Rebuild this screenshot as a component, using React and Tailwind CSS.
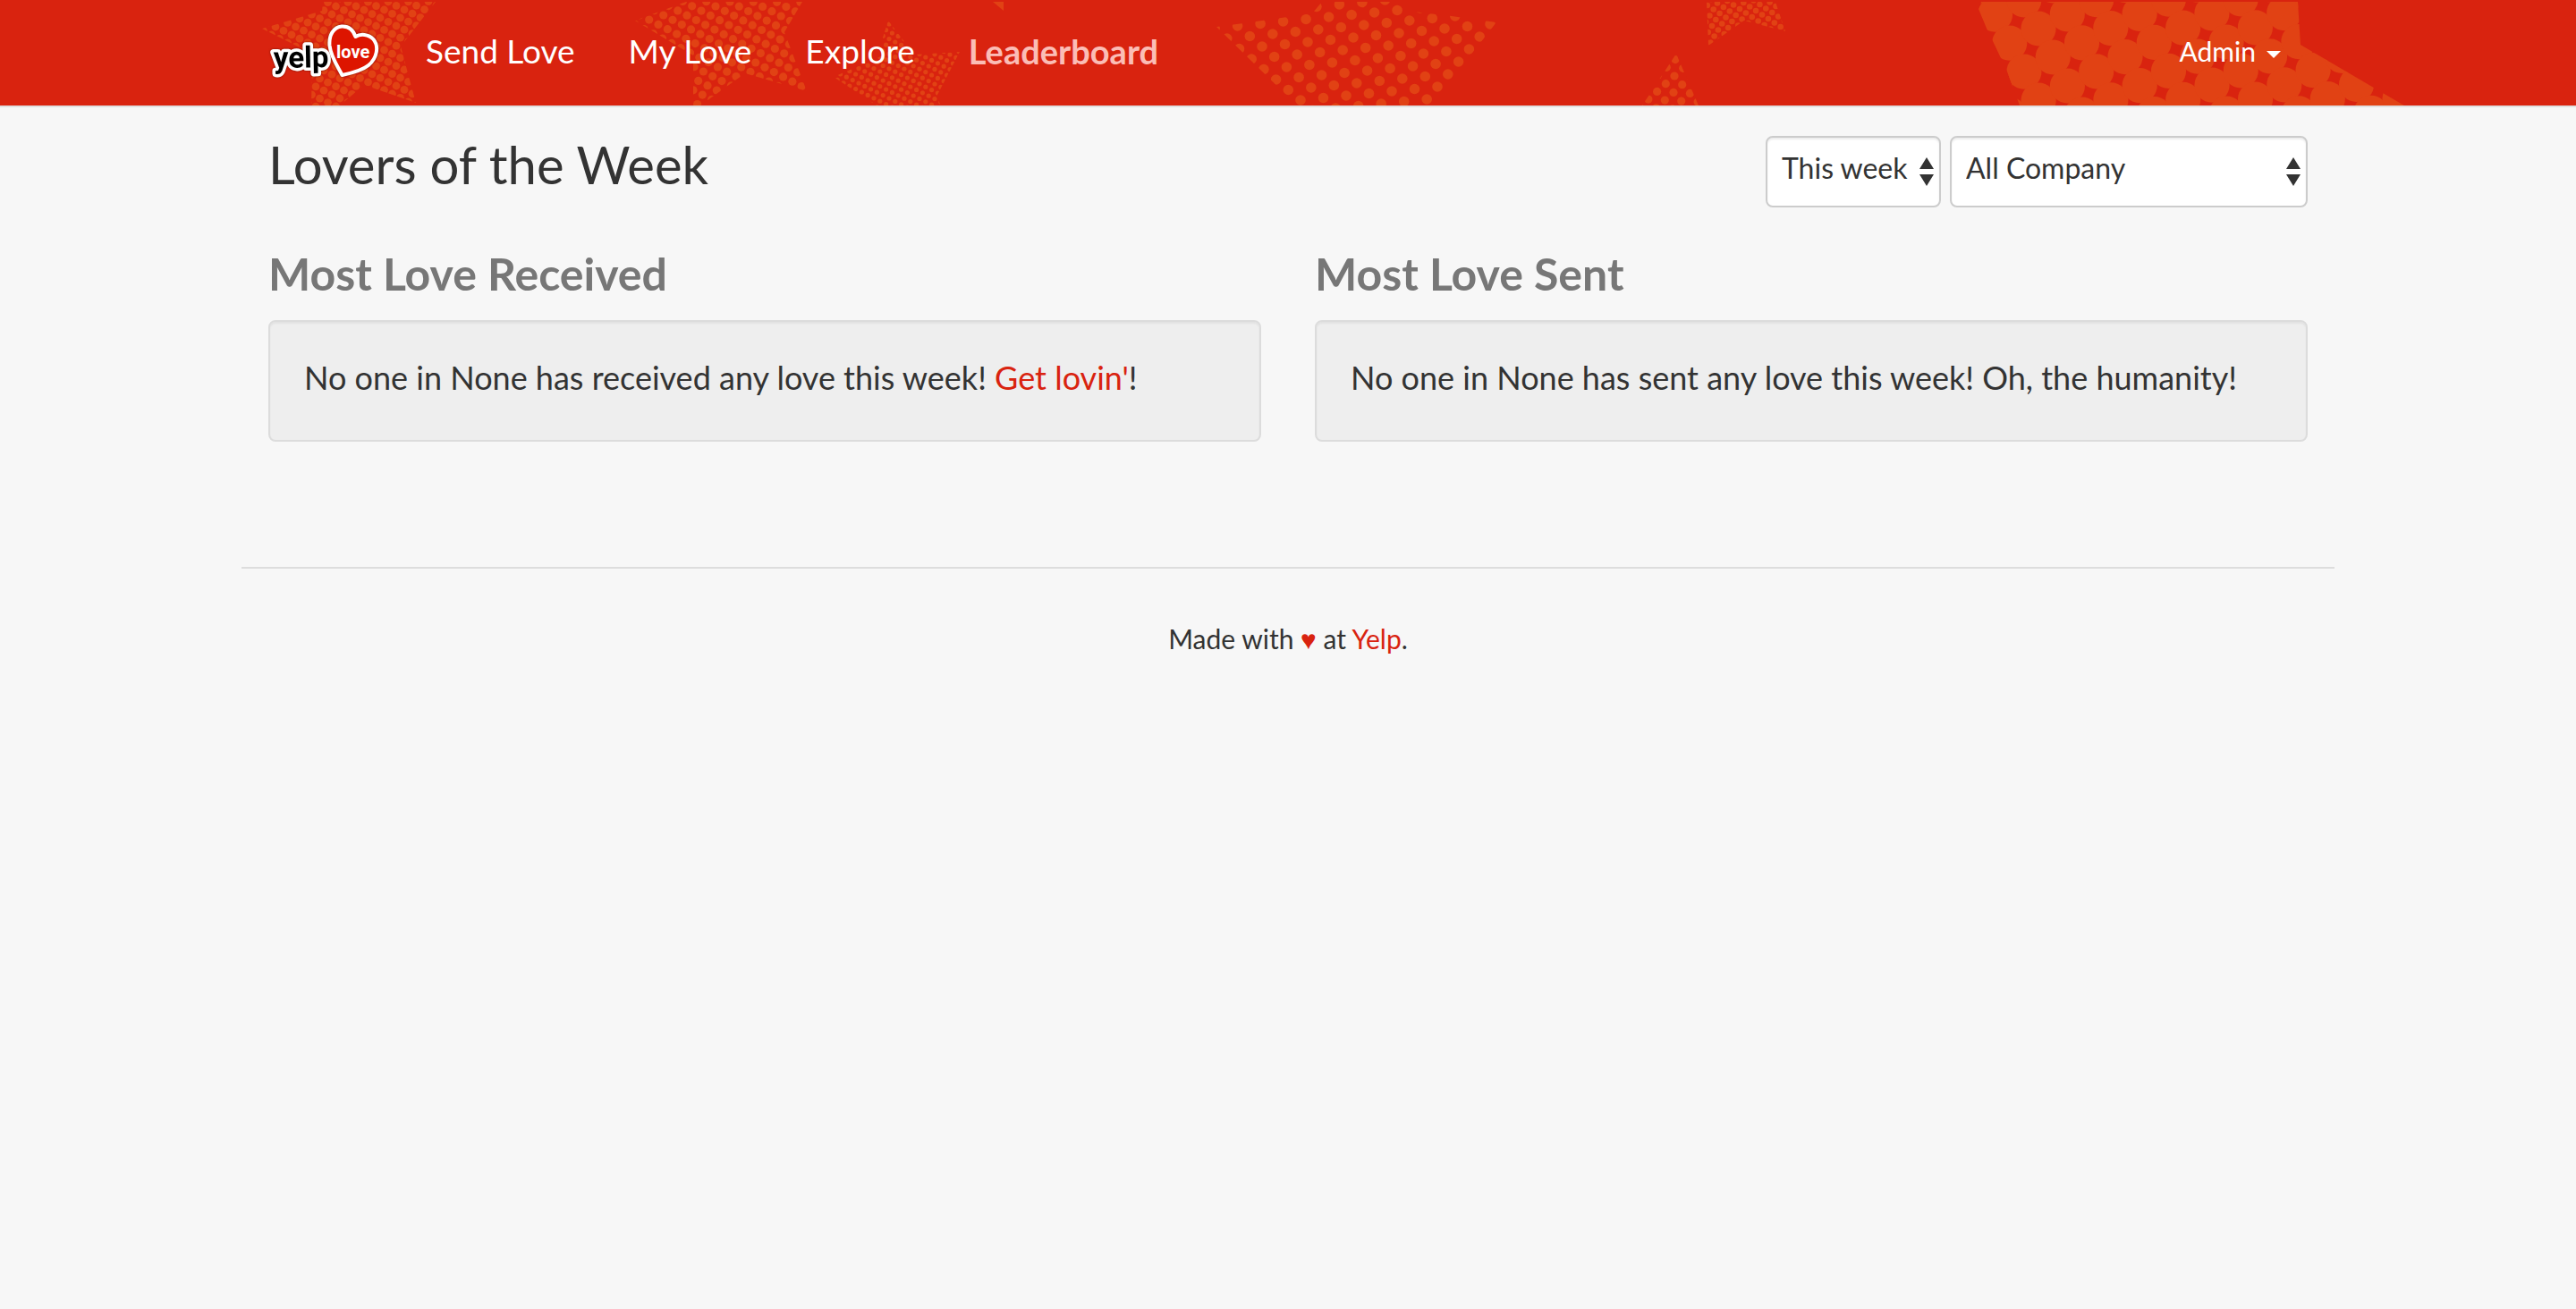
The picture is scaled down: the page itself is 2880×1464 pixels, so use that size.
import React from "react";

const STARS = [
  {
    id: "a",
    outline: "293,32 360,12 361,2 487,2 448,52 465,115 407,95 380,118 348,118 349,60",
    box: [290, 0, 490, 120],
    origin: [425, 20],
    u: [9, 4.4],
    v: [-4.5, 9],
    r: 4.4,
  },
  {
    id: "b",
    outline: "710,23 767,2 897,2 877,36 902,102 833,82 783,118 775,118 775,62",
    box: [705, 0, 905, 120],
    origin: [800, 7],
    u: [16, -5.1],
    v: [10.3, 5.3],
    r: 4.6,
  },
  {
    id: "c",
    outline: "993,23 1022,61 1073,58 1047,108 1052,118 980,118 932,86 987,62 987,42",
    box: [930, 20, 1075, 120],
    origin: [994, 27],
    u: [6.8, 3.4],
    v: [-3.4, 6.6],
    r: 2.6,
  },
  {
    id: "d",
    outline: "1360,30 1390,26 1467,15 1478,2 1557,2 1580,13 1623,18 1673,25 1600,118 1450,118",
    box: [1355, 0, 1680, 120],
    origin: [1411, 52],
    u: [25.5, -2.5],
    v: [13.7, 11.5],
    r: 5.8,
  },
  {
    id: "e",
    outline: "1908,2 1985,2 1996,35 1950,23 1910,51",
    box: [1905, 0, 2000, 55],
    origin: [1914, 29],
    u: [6.9, 4.5],
    v: [-4.3, 7],
    r: 3.3,
  },
  {
    id: "f",
    outline: "1874,60 1899,118 1836,118",
    box: [1830, 55, 1905, 120],
    origin: [1872, 85],
    u: [8.7, 9.7],
    v: [-9.7, 8.7],
    r: 4.6,
  },
  {
    id: "g",
    outline: "2215,2 2212,10 2222,34 2228,46 2244,80 2258,118 2688,118 2664,104 2572,50 2569,2",
    box: [2190, -20, 2710, 140],
    origin: [2279, 32],
    u: [32.3, -16.2],
    v: [16.2, 32],
    r: 19.6,
  },
];

function latticeDots({ box, origin, u, v, r }) {
  const [x0, y0, x1, y1] = box;
  const dots = [];
  for (let i = -60; i <= 60; i++) {
    for (let j = -60; j <= 60; j++) {
      const x = origin[0] + i * u[0] + j * v[0];
      const y = origin[1] + i * u[1] + j * v[1];
      if (x > x0 - r && x < x1 + r && y > y0 - r && y < y1 + r) dots.push([x, y]);
    }
  }
  return dots;
}

function StarBackdrop() {
  return (
    <svg
      aria-hidden="true"
      className="absolute inset-0 h-full w-full"
      viewBox="0 0 2880 118"
      preserveAspectRatio="xMidYMid slice"
      fill="#e14214"
    >
      {STARS.map((star) => (
        <g key={star.id}>
          <clipPath id={`star-${star.id}`}>
            <polygon points={star.outline} />
          </clipPath>
          <g clipPath={`url(#star-${star.id})`}>
            {latticeDots(star).map(([x, y], i) => (
              <circle key={i} cx={x} cy={y} r={star.r} />
            ))}
          </g>
        </g>
      ))}
      <polygon points="1110,2 1122,2 1122,12" />
    </svg>
  );
}

function Logo() {
  return (
    <svg viewBox="10 10 126 64" className="h-16 w-[126px]" role="img" aria-label="Yelp Love">
      <g style={{ filter: "drop-shadow(0 0 1px rgba(90,10,0,0.8))" }}>
        <text
          x="16"
          y="61"
          transform="rotate(-1 16 61)"
          fontFamily="Roboto, sans-serif"
          fontWeight="700"
          fontSize="33"
          fill="#000"
          stroke="#fff"
          strokeWidth="7"
          strokeLinejoin="round"
          paintOrder="stroke"
        >
          yelp
        </text>
        <path
          d="M92.5 69 C88 60 80 49 78.500 36 C77.500 24 83 15.500 92 14.500 C100 14 105 19 107.500 26 C113 22.500 122 23 127.500 29 C134 37 131.500 50 122 58 C114 64.500 102 67 92.500 69 Z"
          fill="#dd1500"
          stroke="#fff"
          strokeWidth="4"
          strokeLinejoin="round"
        />
      </g>
      <text x="86" y="50" fontFamily="Roboto, sans-serif" fontWeight="700" fontSize="20" fill="#fff">
        love
      </text>
    </svg>
  );
}

function NavLink({ active, children }) {
  return (
    <a
      href="#"
      aria-current={active ? "page" : undefined}
      className={
        active
          ? "text-[38px] leading-10 font-bold text-[#fbbdb6]"
          : "text-[37px] leading-10 text-white"
      }
    >
      {children}
    </a>
  );
}

function Picker({ label, width, children }) {
  return (
    <div className={`relative ${width}`}>
      <select
        aria-label={label}
        className="h-20 w-full appearance-none rounded-lg border-2 border-[#ccc] bg-white pb-2 pl-4 text-[32px] leading-12 text-[#333] shadow-[inset_0_2px_2px_rgba(0,0,0,0.075)]"
      >
        {children}
      </select>
      <svg
        aria-hidden="true"
        viewBox="0 0 16 32"
        className="pointer-events-none absolute top-6 right-2 h-8 w-4"
        fill="#333"
      >
        <path d="M8 0l8 13H0zM0 19h16L8 32z" />
      </svg>
    </div>
  );
}

function Board({ title, children }) {
  return (
    <section>
      <h3 className="text-[50px] leading-14 font-bold text-[#777]">{title}</h3>
      <div className="mt-6 rounded-lg border-2 border-[#dcdcdc] bg-[#eee] px-[38px] pt-[38px] pb-[46px] shadow-[inset_0_2px_2px_rgba(0,0,0,0.05)]">
        <p className="text-[36px] leading-12">{children}</p>
      </div>
    </section>
  );
}

export default function App() {
  return (
    <div className="min-h-screen bg-[#f7f7f7] font-['Lato',sans-serif] text-[#333]">
      <header className="relative border-b-2 border-[#e0e0e0] bg-[#d9230f]">
        <StarBackdrop />
        <div className="relative mx-auto flex h-[118px] max-w-[2340px] items-center justify-between px-[30px] pb-1">
          <nav className="flex items-center gap-[60px]">
            <a href="#" className="-mr-[10px]">
              <Logo />
            </a>
            <NavLink>Send Love</NavLink>
            <NavLink>My Love</NavLink>
            <NavLink>Explore</NavLink>
            <NavLink active>Leaderboard</NavLink>
          </nav>
          <button type="button" className="flex items-center gap-3 pr-[30px] text-[30px] leading-10 text-white">
            Admin
            <svg aria-hidden="true" viewBox="0 0 16 8" className="mt-2 h-2 w-4" fill="currentColor">
              <path d="M0 0h16L8 8z" />
            </svg>
          </button>
        </div>
      </header>

      <div className="mx-auto max-w-[2340px]">
        <main className="px-[30px] pt-8">
          <div className="flex items-start justify-between">
            <h2 className="text-[58px] leading-16">Lovers of the Week</h2>
            <div className="flex gap-[10px]">
              <Picker label="Time span" width="w-[196px]">
                <option>This week</option>
              </Picker>
              <Picker label="Department" width="w-[400px]">
                <option>All Company</option>
              </Picker>
            </div>
          </div>
          <div className="mt-[46px] grid grid-cols-2 gap-[60px]">
            <Board title="Most Love Received">
              No one in None has received any love this week!{" "}
              <a href="#" className="text-[#d9230f]">
                Get lovin'
              </a>
              !
            </Board>
            <Board title="Most Love Sent">
              No one in None has sent any love this week! Oh, the humanity!
            </Board>
          </div>
        </main>
        <footer className="mt-[140px] border-t-2 border-[#ddd] pt-[58px] text-center text-[30px] leading-10">
          Made with <span className="text-[#d9230f]">♥</span> at{" "}
          <a href="#" className="text-[#d9230f]">
            Yelp
          </a>
          .
        </footer>
      </div>
    </div>
  );
}
